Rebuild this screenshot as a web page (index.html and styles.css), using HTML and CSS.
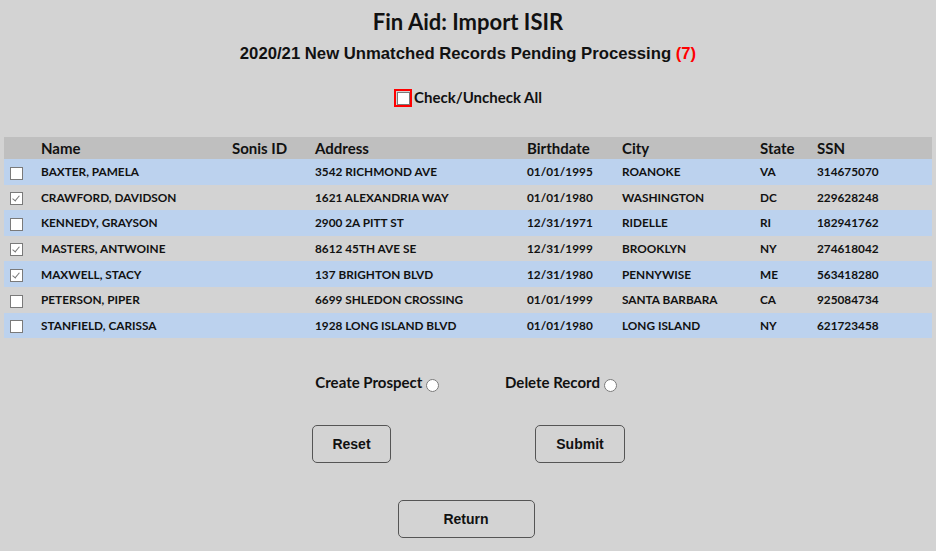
FILE: index.html
```html
<!DOCTYPE html>
<html>
<head>
  <link rel="stylesheet" href="styles.css">
</head>
<body>
  <div class="page">
    <h1 class="title">Fin Aid: Import ISIR</h1>
    <h2 class="subtitle">2020/21 New Unmatched Records Pending Processing <span class="count">(7)</span></h2>

    <div class="check-all">
      <span class="check-all-box"><input type="checkbox" id="check-all"></span>
      <label for="check-all">Check/Uncheck All</label>
    </div>

    <table class="records">
      <colgroup>
        <col style="width: 33px">
        <col style="width: 191px">
        <col style="width: 83px">
        <col style="width: 212px">
        <col style="width: 95px">
        <col style="width: 138px">
        <col style="width: 57px">
        <col style="width: 119px">
      </colgroup>
      <thead>
        <tr>
          <th></th>
          <th>Name</th>
          <th>Sonis ID</th>
          <th>Address</th>
          <th>Birthdate</th>
          <th>City</th>
          <th>State</th>
          <th>SSN</th>
        </tr>
      </thead>
      <tbody>
        <tr>
          <td class="pick"><input type="checkbox" class="row-check"></td>
          <td>BAXTER, PAMELA</td><td></td><td>3542 RICHMOND AVE</td><td>01/01/1995</td><td>ROANOKE</td><td>VA</td><td>314675070</td>
        </tr>
        <tr>
          <td class="pick"><input type="checkbox" class="row-check" checked></td>
          <td>CRAWFORD, DAVIDSON</td><td></td><td>1621 ALEXANDRIA WAY</td><td>01/01/1980</td><td>WASHINGTON</td><td>DC</td><td>229628248</td>
        </tr>
        <tr>
          <td class="pick"><input type="checkbox" class="row-check"></td>
          <td>KENNEDY, GRAYSON</td><td></td><td>2900 2A PITT ST</td><td>12/31/1971</td><td>RIDELLE</td><td>RI</td><td>182941762</td>
        </tr>
        <tr>
          <td class="pick"><input type="checkbox" class="row-check" checked></td>
          <td>MASTERS, ANTWOINE</td><td></td><td>8612 45TH AVE SE</td><td>12/31/1999</td><td>BROOKLYN</td><td>NY</td><td>274618042</td>
        </tr>
        <tr>
          <td class="pick"><input type="checkbox" class="row-check" checked></td>
          <td>MAXWELL, STACY</td><td></td><td>137 BRIGHTON BLVD</td><td>12/31/1980</td><td>PENNYWISE</td><td>ME</td><td>563418280</td>
        </tr>
        <tr>
          <td class="pick"><input type="checkbox" class="row-check"></td>
          <td>PETERSON, PIPER</td><td></td><td>6699 SHLEDON CROSSING</td><td>01/01/1999</td><td>SANTA BARBARA</td><td>CA</td><td>925084734</td>
        </tr>
        <tr>
          <td class="pick"><input type="checkbox" class="row-check"></td>
          <td>STANFIELD, CARISSA</td><td></td><td>1928 LONG ISLAND BLVD</td><td>01/01/1980</td><td>LONG ISLAND</td><td>NY</td><td>621723458</td>
        </tr>
      </tbody>
    </table>

    <div class="actions">
      <label class="action">Create Prospect <input type="radio" name="action" value="create"></label>
      <label class="action">Delete Record <input type="radio" name="action" value="delete"></label>
    </div>

    <div class="button-row">
      <button id="reset" class="btn btn-reset">Reset</button>
      <button id="submit" class="btn btn-submit">Submit</button>
    </div>

    <div class="return-row">
      <button id="return" class="btn btn-return">Return</button>
    </div>
  </div>

  <script>
    // Check/Uncheck All toggles every row
    document.getElementById('check-all').addEventListener('change', function() {
      var boxes = document.querySelectorAll('.row-check');
      for (var i = 0; i < boxes.length; i++) {
        boxes[i].checked = this.checked;
      }
    });

    // Reset clears rows and the action choice
    document.getElementById('reset').addEventListener('click', function() {
      var inputs = document.querySelectorAll('input');
      for (var i = 0; i < inputs.length; i++) {
        inputs[i].checked = false;
      }
    });
  </script>
</body>
</html>
```

FILE: styles.css
```css
body {
  margin: 0;
  background-color: #D3D3D3;
  font-family: Lato, sans-serif;
  color: #111;
}

.page {
  padding: 4px 4px 0;
}

.title {
  font-size: 22px;
  font-weight: bold;
  text-align: center;
  margin: 5px 0 0;
  line-height: 26px;
}

.subtitle {
  font-family: 'Liberation Sans', Arial, sans-serif;
  font-size: 16.7px;
  font-weight: bold;
  text-align: center;
  margin: 9px 0 0;
  line-height: 20px;
}

.count {
  color: #FF0000;
}

.check-all {
  display: flex;
  justify-content: center;
  align-items: center;
  margin-top: 25px;
  font-size: 15px;
  font-weight: bold;
}

.check-all-box {
  display: flex;
  border: 2px solid #FF0000;
  width: 14px;
  height: 14px;
  align-items: center;
  justify-content: center;
}

.check-all label {
  margin-left: 2px;
  margin-top: -2px;
}

input[type="checkbox"] {
  appearance: none;
  -webkit-appearance: none;
  width: 13px;
  height: 13px;
  margin: 0;
  background: #FFF;
  border: 1px solid #7A7A7A;
  position: relative;
  vertical-align: middle;
}

input[type="checkbox"]:checked::after {
  content: '';
  position: absolute;
  left: 3px;
  top: 1px;
  width: 3px;
  height: 6px;
  border: solid #777;
  border-width: 0 1px 1px 0;
  transform: rotate(40deg);
}

.records {
  margin-top: 30px;
  border-collapse: collapse;
  table-layout: fixed;
  width: 928px;
}

.records th {
  background-color: #BFBFBF;
  font-size: 15px;
  font-weight: bold;
  text-align: left;
  height: 22px;
  padding: 0 4px;
}

.records tbody tr {
  height: 25.6px;
}

.records td {
  font-size: 11.8px;
  font-weight: bold;
  padding: 0 4px;
  white-space: nowrap;
}

.records tbody tr:nth-child(odd) {
  background-color: #BCD2EE;
}

.records td.pick {
  padding: 0 0 0 6px;
}

.actions {
  display: flex;
  justify-content: center;
  gap: 66px;
  margin-top: 35px;
  padding-right: 4px;
  font-size: 15px;
  font-weight: bold;
}

.action input[type="radio"] {
  width: 13px;
  height: 13px;
  margin: 0;
  position: relative;
  top: 4px;
}

.btn {
  font-family: 'Liberation Sans', Arial, sans-serif;
  font-size: 14px;
  font-weight: bold;
  color: #111;
  background: transparent;
  border: 1px solid #555;
  border-radius: 5px;
  height: 38px;
  cursor: pointer;
}

.button-row {
  display: flex;
  justify-content: center;
  gap: 144px;
  margin-top: 34px;
  padding-left: 1px;
}

.btn-reset {
  width: 79px;
}

.btn-submit {
  width: 90px;
}

.return-row {
  display: flex;
  justify-content: center;
  margin-top: 37px;
  padding-right: 4px;
}

.btn-return {
  width: 137px;
}
```
